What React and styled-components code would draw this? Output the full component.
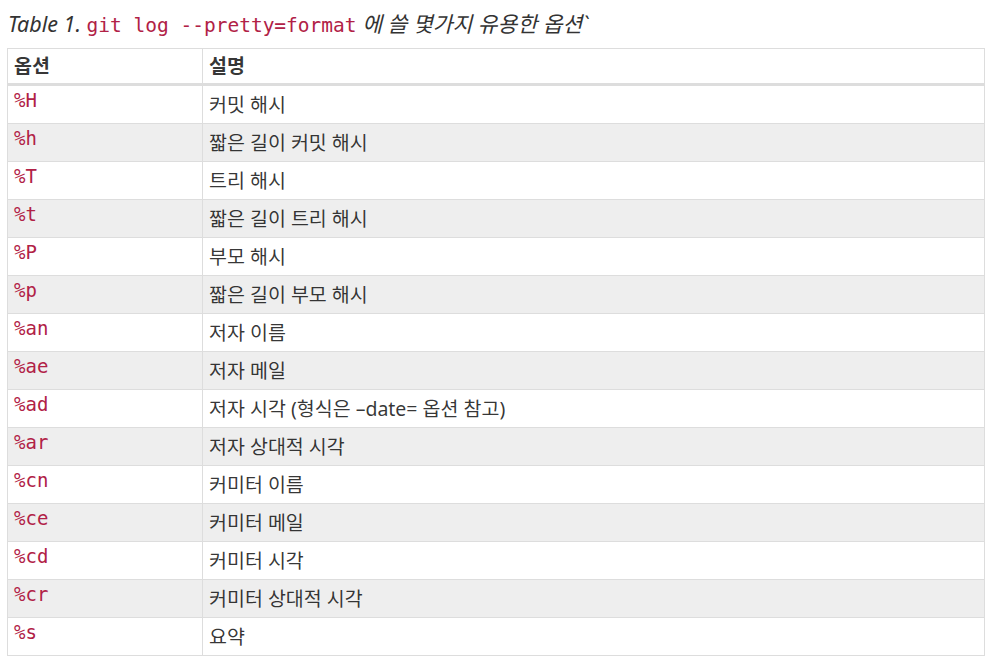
import React from "react";
import styled, { createGlobalStyle } from "styled-components";

const rows = [
  ["%H", "커밋 해시"],
  ["%h", "짧은 길이 커밋 해시"],
  ["%T", "트리 해시"],
  ["%t", "짧은 길이 트리 해시"],
  ["%P", "부모 해시"],
  ["%p", "짧은 길이 부모 해시"],
  ["%an", "저자 이름"],
  ["%ae", "저자 메일"],
  ["%ad", "저자 시각 (형식은 –date= 옵션 참고)"],
  ["%ar", "저자 상대적 시각"],
  ["%cn", "커미터 이름"],
  ["%ce", "커미터 메일"],
  ["%cd", "커미터 시각"],
  ["%cr", "커미터 상대적 시각"],
  ["%s", "요약"],
];

const Global = createGlobalStyle`
  body {
    margin: 0;
    background: #fff;
    font-family: "Noto Sans", "Noto Sans CJK KR", sans-serif;
    color: rgba(0, 0, 0, 0.8);
  }
`;

const Wrap = styled.div`
  padding: 10px 20px 0 7px;
`;

const Caption = styled.div`
  font-style: italic;
  font-size: 21.5px;
  line-height: 28px;
  height: 28px;
  color: #333;
  margin: 0 0 10px 1px;
  white-space: nowrap;
`;

const Code = styled.code`
  font-family: "DejaVu Sans Mono", monospace;
  font-style: normal;
  color: #b12146;
  font-size: 19.5px;
  line-height: 1;
`;

const Table = styled.table`
  width: 978px;
  border-collapse: collapse;
  border: 1px solid #dddddd;
  table-layout: fixed;
`;

const Th = styled.th`
  text-align: left;
  font-weight: bold;
  font-size: 19.5px;
  line-height: 26px;
  color: rgba(0, 0, 0, 0.8);
  height: 34px;
  padding: 0 6px;
  border-right: 1px solid #dddddd;
  border-bottom: 3px solid #dddddd;
`;

const Tr = styled.tr`
  background: ${(p) => (p.$odd ? "#eeeeee" : "#ffffff")};
`;

const Td = styled.td`
  height: 37px;
  padding: 0 6px;
  vertical-align: ${(p) => (p.$code ? "top" : "middle")};
  border-right: 1px solid #dddddd;
  border-bottom: 1px solid #dddddd;
  font-size: 19.5px;
  line-height: 28px;
  color: rgba(0, 0, 0, 0.8);
`;

const CellCode = styled(Code)`
  display: inline-block;
  font-size: 19px;
  line-height: 26px;
`;

export default function App() {
  return (
    <Wrap>
      <Global />
      <Caption>
        Table 1. <Code>git log --pretty=format</Code> 에 쓸 몇가지 유용한 옵션`
      </Caption>
      <Table>
        <colgroup>
          <col style={{ width: "195px" }} />
          <col />
        </colgroup>
        <thead>
          <tr>
            <Th>옵션</Th>
            <Th>설명</Th>
          </tr>
        </thead>
        <tbody>
          {rows.map(([opt, desc], i) => (
            <Tr key={opt} $odd={i % 2 === 1}>
              <Td $code>
                <CellCode>{opt}</CellCode>
              </Td>
              <Td>{desc}</Td>
            </Tr>
          ))}
        </tbody>
      </Table>
    </Wrap>
  );
}
